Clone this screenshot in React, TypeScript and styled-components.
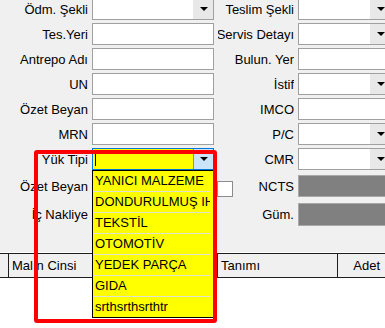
import styled, { createGlobalStyle } from 'styled-components';

const GlobalStyle = createGlobalStyle`
  html,
  body {
    margin: 0;
    padding: 0;
    background: #f0f0f0;
  }

  body {
    font-family: 'Liberation Sans', Arial, sans-serif;
    font-size: 13px;
    color: #000;
  }
`;

const Screen = styled.div`
  position: relative;
  display: flex;
  flex-direction: column;
  width: 385px;
  height: 328px;
  overflow: hidden;
  background: #f0f0f0;
`;

const Form = styled.div`
  display: flex;
  flex-direction: column;
  gap: 3px;
  margin-top: -2px;
`;

const Row = styled.div<{ $extra?: number; $h?: number }>`
  display: grid;
  grid-template-columns: 88px 122px 76px 93px;
  column-gap: 4px;
  height: ${({ $h }) => $h ?? 22}px;
  margin-top: ${({ $extra }) => $extra ?? 0}px;
`;

const Label = styled.div`
  display: flex;
  align-items: center;
  justify-content: flex-end;
  white-space: nowrap;
  overflow: hidden;
`;

const CheckLabel = styled.div`
  display: flex;
  align-items: center;
  justify-content: space-between;
  white-space: nowrap;
`;

const CheckBox = styled.span`
  align-self: flex-end;
  box-sizing: border-box;
  width: 16px;
  height: 16px;
  margin-left: -1px;
  border: 1px solid #8c8c8c;
  background: #fff;
`;

const TextBox = styled.div<{ $disabled?: boolean }>`
  box-sizing: border-box;
  height: 100%;
  border: 1px solid ${({ $disabled }) => ($disabled ? '#a8a8a8' : '#a0a0a0')};
  background: ${({ $disabled }) => ($disabled ? '#808080' : '#fff')};
`;

const ComboWrap = styled.div`
  position: relative;
  height: 100%;
`;

const ComboBox = styled.div<{ $focused?: boolean }>`
  box-sizing: border-box;
  display: flex;
  height: 100%;
  border: 1px solid ${({ $focused }) => ($focused ? '#0078d7' : '#a0a0a0')};
  background: ${({ $focused }) => ($focused ? '#ffff00' : '#fff')};
`;

const ComboText = styled.div`
  flex: 1;
  display: flex;
  align-items: center;
  padding-left: 2px;
`;

const Caret = styled.span`
  width: 1px;
  height: 13px;
  background: #000;
`;

const DropButton = styled.div<{ $focused?: boolean }>`
  display: flex;
  align-items: center;
  justify-content: center;
  width: 19px;
  background: ${({ $focused }) => ($focused ? '#cce4f7' : '#e8e8e8')};
  border-left: 1px solid ${({ $focused }) => ($focused ? '#569de5' : 'transparent')};
`;

const DropList = styled.ul`
  position: absolute;
  top: 100%;
  left: 0;
  z-index: 2;
  box-sizing: border-box;
  width: 100%;
  margin: 0;
  padding: 0;
  list-style: none;
  border: 1px solid #000;
  background: #ffff00;
`;

const DropItem = styled.li`
  height: 20px;
  margin-right: 3px;
  padding-left: 2px;
  line-height: 20px;
  white-space: nowrap;
  overflow: hidden;
  border-bottom: 1px solid #e2e2d0;

  &:last-child {
    border-bottom: none;
  }
`;

const Highlight = styled.div`
  position: absolute;
  left: 34px;
  top: 150px;
  z-index: 3;
  box-sizing: border-box;
  width: 183px;
  height: 173px;
  border: 4px solid #ff0000;
  border-radius: 3px;
  pointer-events: none;
`;

const Table = styled.div`
  flex: 1;
  display: flex;
  flex-direction: column;
  margin-top: 27px;
`;

const HeaderRow = styled.div`
  display: grid;
  grid-template-columns: 9px 209px 120px 1fr;
  box-sizing: border-box;
  height: 25px;
  border-top: 1px solid #1e1e1e;
  border-bottom: 1px solid #1e1e1e;
  box-shadow: 0 -1px 0 #ffffff;
  background: #f0f0f0;
`;

const HeaderCell = styled.div<{ $right?: boolean }>`
  display: flex;
  align-items: center;
  justify-content: ${({ $right }) => ($right ? 'flex-end' : 'flex-start')};
  padding: ${({ $right }) => ($right ? '0 5px 0 0' : '0 0 0 3px')};
  border-right: 1px solid #1e1e1e;
  white-space: nowrap;
  overflow: hidden;

  &:last-child {
    border-right: none;
  }
`;

const TableBody = styled.div`
  flex: 1;
  background: #fff;
`;

function Arrow() {
  return (
    <svg width="8" height="4" viewBox="0 0 8 4">
      <polygon points="0,0 8,0 4,4" fill="#000" />
    </svg>
  );
}

function Combo({ focused, children }: { focused?: boolean; children?: React.ReactNode }) {
  return (
    <ComboBox $focused={focused}>
      <ComboText>{children}</ComboText>
      <DropButton $focused={focused}>
        <Arrow />
      </DropButton>
    </ComboBox>
  );
}

const loadTypes = [
  'YANICI MALZEME',
  'DONDURULMUŞ IHRACAT',
  'TEKSTİL',
  'OTOMOTİV',
  'YEDEK PARÇA',
  'GIDA',
  'srthsrthsrthtr',
];

export default function App() {
  return (
    <Screen>
      <GlobalStyle />
      <Form>
        <Row>
          <Label>Ödm. Şekli</Label>
          <Combo />
          <Label>Teslim Şekli</Label>
          <Combo />
        </Row>
        <Row>
          <Label>Tes.Yeri</Label>
          <TextBox />
          <Label>Servis Detayı</Label>
          <Combo />
        </Row>
        <Row>
          <Label>Antrepo Adı</Label>
          <TextBox />
          <Label>Bulun. Yer</Label>
          <TextBox />
        </Row>
        <Row>
          <Label>UN</Label>
          <TextBox />
          <Label>İstif</Label>
          <Combo />
        </Row>
        <Row>
          <Label>Özet Beyan</Label>
          <TextBox />
          <Label>IMCO</Label>
          <TextBox />
        </Row>
        <Row>
          <Label>MRN</Label>
          <TextBox />
          <Label>P/C</Label>
          <Combo />
        </Row>
        <Row>
          <Label>Yük Tipi</Label>
          <ComboWrap>
            <Combo focused>
              <Caret />
            </Combo>
            <DropList>
              {loadTypes.map((t) => (
                <DropItem key={t}>{t}</DropItem>
              ))}
            </DropList>
          </ComboWrap>
          <Label>CMR</Label>
          <Combo />
        </Row>
        <Row $extra={2}>
          <Label>Özet Beyan</Label>
          <TextBox />
          <CheckLabel>
            <CheckBox />
            <span>NCTS</span>
          </CheckLabel>
          <TextBox $disabled />
        </Row>
        <Row $extra={3} $h={23}>
          <Label>İç Nakliye</Label>
          <TextBox />
          <Label>Güm.</Label>
          <TextBox $disabled />
        </Row>
      </Form>

      <Table>
        <HeaderRow>
          <HeaderCell />
          <HeaderCell>Malın Cinsi</HeaderCell>
          <HeaderCell>Tanımı</HeaderCell>
          <HeaderCell $right>Adet</HeaderCell>
        </HeaderRow>
        <TableBody />
      </Table>

      <Highlight />
    </Screen>
  );
}
